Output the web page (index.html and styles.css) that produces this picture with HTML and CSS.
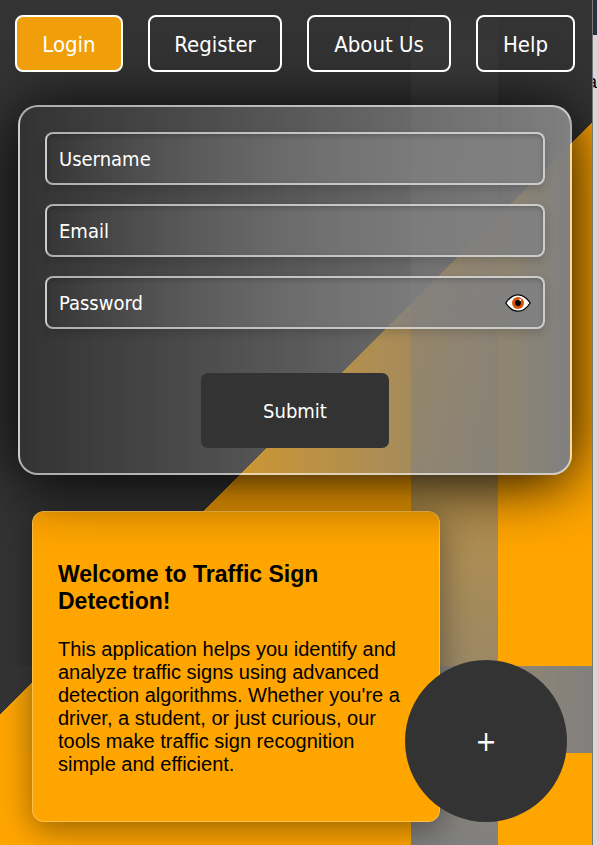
FILE: index.html
```html
<!DOCTYPE html>
<html lang="en">
<head>
<meta charset="utf-8">
<meta name="viewport" content="width=device-width, initial-scale=1">
<title>Traffic Sign Detection</title>
<link rel="stylesheet" href="styles.css">
</head>
<body>
<div class="page">
  <nav class="nav">
    <a class="nav-link active" href="#login">Login</a>
    <a class="nav-link" href="#register">Register</a>
    <a class="nav-link" href="#about">About Us</a>
    <a class="nav-link" href="#help">Help</a>
  </nav>
  <form class="form">
    <input class="field" type="text" placeholder="Username" aria-label="Username">
    <input class="field" type="email" placeholder="Email" aria-label="Email">
    <div class="password">
      <input class="field" type="password" placeholder="Password" aria-label="Password">
      <button class="eye" type="button" aria-label="Show password">
        <svg viewBox="0 0 26 18" width="26" height="18">
          <path d="M.8 9C4 4 8 .8 13 .8S22 4 25.2 9C22 14 18 17.2 13 17.2S4 14 .8 9z" fill="#fff" stroke="#000" stroke-width="1.3"/>
          <circle cx="13" cy="9" r="6" fill="#d4530f"/>
          <circle cx="13" cy="9" r="2.9" fill="#000"/>
          <circle cx="15.3" cy="5.8" r="1.1" fill="#fff"/>
        </svg>
      </button>
    </div>
    <button class="submit" type="submit">Submit</button>
  </form>
  <section class="welcome">
    <h2>Welcome to Traffic Sign Detection!</h2>
    <p>This application helps you identify and analyze traffic signs using advanced detection algorithms. Whether you're a driver, a student, or just curious, our tools make traffic sign recognition simple and efficient.</p>
  </section>
  <button class="add" type="button" aria-label="Add">+</button>
</div>
<aside class="edge"><div class="edge-bar"></div><span>a</span></aside>
</body>
</html>
```
FILE: styles.css
```css
* { box-sizing: border-box; }

body {
  margin: 0;
  min-height: 100vh;
  display: flex;
  overflow: hidden;
  font-family: "DejaVu Sans Condensed", "Noto Sans", sans-serif;
}

.page {
  position: relative;
  flex: 1;
  min-width: 0;
  overflow: hidden;
  padding-bottom: 23px;
  background:
    linear-gradient(to right, transparent, gray) right 0 bottom 92px / 100% 87px no-repeat,
    linear-gradient(to bottom, transparent, gray) right 94px top 0 / 87px 100% no-repeat,
    linear-gradient(135deg, #333 calc(50% - 3px), orange calc(50% - 3px));
}

.nav {
  position: relative;
  z-index: 2;
  display: grid;
  grid-template-columns: 108fr 134fr 144fr 99fr;
  gap: 25px;
  padding: 15px 17px 0 15px;
}

.nav-link {
  display: flex;
  align-items: center;
  justify-content: center;
  height: 57px;
  padding-top: 2px;
  border: 2px solid #fff;
  border-radius: 8px;
  color: #fff;
  font-size: 22px;
  white-space: nowrap;
  text-decoration: none;
}

.nav-link.active { background: #f09f0a; }

.form {
  position: relative;
  z-index: 1;
  display: flex;
  flex-direction: column;
  gap: 19px;
  margin: 33px 20px 0 18px;
  padding: 25px;
  border: 2px solid rgba(255, 255, 255, 0.6);
  border-radius: 20px;
  background: linear-gradient(to right, transparent, gray);
  box-shadow: 0 6px 64px #000;
}

.field {
  display: block;
  width: 100%;
  height: 53px;
  padding: 0 12px;
  border: 2px solid rgba(255, 255, 255, 0.6);
  border-radius: 8px;
  background: linear-gradient(to right, transparent, gray);
  box-shadow: 0 4px 10px rgba(0, 0, 0, 0.15), inset 0 2px 5px rgba(0, 0, 0, 0.2);
  color: #fff;
  font-family: inherit;
  font-size: 20px;
}

.field::placeholder { color: #fff; opacity: 1; }

.password { position: relative; }

.eye {
  position: absolute;
  top: 0;
  right: 14px;
  height: 100%;
  padding: 0;
  border: 0;
  background: none;
}

.eye svg { display: block; }

.submit {
  align-self: center;
  width: 188px;
  height: 75px;
  margin-top: 25px;
  border: 0;
  border-radius: 7px;
  background: #333;
  color: #fff;
  font-family: inherit;
  font-size: 20px;
}

.welcome {
  margin: 36px 152px 0 32px;
  padding: 25px;
  border: 1px solid rgba(255, 255, 255, 0.3);
  border-radius: 12px;
  background: orange;
  box-shadow: 0 8px 32px rgba(0, 0, 0, 0.4);
  color: #000;
  font-family: "Liberation Sans", Arial, sans-serif;
  font-size: 20px;
  line-height: 23px;
}

.welcome h2 {
  margin: 24px 0 23px;
  font-size: 23px;
  line-height: 27px;
}

.welcome p { margin: 0 0 20px; }

.add {
  position: absolute;
  z-index: 3;
  right: 25px;
  bottom: 23px;
  width: 162px;
  height: 162px;
  padding: 0;
  border: 0;
  border-radius: 50%;
  background: #333;
  color: #fff;
  font-family: inherit;
  font-size: 28px;
}

.edge {
  width: 5px;
  overflow: hidden;
  border-left: 1px solid #777;
  background: #d9d6d9;
  color: #000;
  font: 18px/20px "Liberation Sans", Arial, sans-serif;
  direction: rtl;
}

.edge-bar {
  height: 35px;
  margin-bottom: 37px;
  background: #23333f;
}
```
